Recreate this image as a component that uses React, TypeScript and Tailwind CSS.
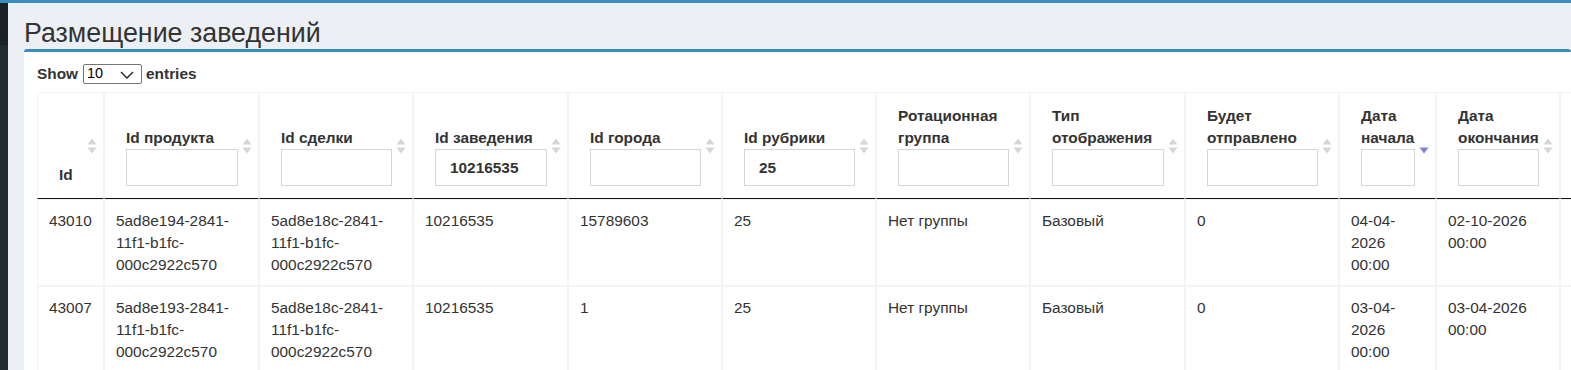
import React from 'react';

type Col = { key: string; label: string; width: number; filter?: string; hasInput: boolean; sort: 'both' | 'desc' };

const COLUMNS: Col[] = [
  { key: 'id', label: 'Id', width: 67, hasInput: false, sort: 'both' },
  { key: 'product', label: 'Id продукта', width: 155, hasInput: true, sort: 'both' },
  { key: 'deal', label: 'Id сделки', width: 154, hasInput: true, sort: 'both' },
  { key: 'place', label: 'Id заведения', width: 155, hasInput: true, filter: '10216535', sort: 'both' },
  { key: 'city', label: 'Id города', width: 154, hasInput: true, sort: 'both' },
  { key: 'rubric', label: 'Id рубрики', width: 154, hasInput: true, filter: '25', sort: 'both' },
  { key: 'group', label: 'Ротационная группа', width: 154, hasInput: true, sort: 'both' },
  { key: 'type', label: 'Тип отображения', width: 155, hasInput: true, sort: 'both' },
  { key: 'sent', label: 'Будет отправлено', width: 154, hasInput: true, sort: 'both' },
  { key: 'start', label: 'Дата начала', width: 97, hasInput: true, sort: 'desc' },
  { key: 'end', label: 'Дата окончания', width: 124, hasInput: true, sort: 'both' },
  // next column runs past the visible edge
  { key: 'more', label: '', width: 150, hasInput: false, sort: 'both' },
];

const ROWS: string[][] = [
  ['43010', '5ad8e194-2841-11f1-b1fc-000c2922c570', '5ad8e18c-2841-11f1-b1fc-000c2922c570', '10216535', '15789603', '25', 'Нет группы', 'Базовый', '0', '04-04-2026 00:00', '02-10-2026 00:00', ''],
  ['43007', '5ad8e193-2841-11f1-b1fc-000c2922c570', '5ad8e18c-2841-11f1-b1fc-000c2922c570', '10216535', '1', '25', 'Нет группы', 'Базовый', '0', '03-04-2026 00:00', '03-04-2026 00:00', ''],
];

const SortBoth = () => (
  <svg width="10" height="17" viewBox="0 0 10 17" className="block">
    <polygon points="0.5,7 5,1 9.5,7" fill="#d6d6d6" />
    <polygon points="0.5,10 9.5,10 5,16" fill="#d6d6d6" />
  </svg>
);

const SortDesc = () => (
  <svg width="10" height="17" viewBox="0 0 10 17" className="block">
    <polygon points="0.5,10 9.5,10 5,16" fill="#7f82dd" />
  </svg>
);

export default function App() {
  const tableWidth = COLUMNS.reduce((s, c) => s + c.width, 0);

  return (
    <div className="h-[370px] w-full overflow-hidden bg-[#ecf0f5] font-['Liberation_Sans',Arial,sans-serif] text-[#333]">
      <div className="h-[3px] bg-[#3c8dbc]" />
      <div className="flex h-[367px]">
        {/* sidebar edge */}
        <div className="flex w-[8px] shrink-0 flex-col">
          <div className="h-[42px] bg-[#1a2226]" />
          <div className="flex-1 bg-[#222d32]" />
        </div>

        <div className="min-w-0 flex-1 pl-[16px]">
          <h1 className="pt-[16px] text-[26.8px] font-normal leading-[29px] text-[#333]">Размещение заведений</h1>

          <div className="mt-[1px] h-[400px] overflow-hidden rounded-t-[3px] border-t-[3px] border-[#3c8dbc] bg-white pl-[13px] pt-[11px]">
            <div className="flex h-[22px] items-center text-[15.4px] font-bold">
              <span>Show</span>
              <div className="relative ml-[5px] mr-[4px] flex h-[20px] w-[59px] items-center rounded-[2px] border border-[#767676] bg-white pl-[3px] text-[14.5px] font-normal text-black">
                10
                <svg width="14" height="8" viewBox="0 0 14 8" className="absolute right-[7px] top-[6px]">
                  <path d="M1 1 L7 7 L13 1" fill="none" stroke="#222" strokeWidth="1.4" />
                </svg>
              </div>
              <span>entries</span>
            </div>

            <table
              className="mt-[7px] table-fixed border-separate border-spacing-0 text-[15.4px] leading-[22px]"
              style={{ width: tableWidth }}
            >
              <colgroup>
                {COLUMNS.map((c) => (
                  <col key={c.key} style={{ width: c.width }} />
                ))}
              </colgroup>
              <thead>
                <tr>
                  {COLUMNS.map((c) => (
                    <th
                      key={c.key}
                      className="relative border border-[#f4f4f4] border-b-[#111] pb-[12px] pl-[21px] pr-[20px] pt-[12px] text-left align-bottom font-bold"
                    >
                      <div>{c.label}</div>
                      {c.hasInput && (
                        <div className="flex h-[37px] w-full items-center border border-[#d2d6de] bg-white pl-[14px] font-bold text-[#333]">
                          {c.filter}
                        </div>
                      )}
                      {c.label && (
                        <span className="absolute right-[6px] top-1/2 -translate-y-1/2">
                          {c.sort === 'desc' ? <SortDesc /> : <SortBoth />}
                        </span>
                      )}
                    </th>
                  ))}
                </tr>
              </thead>
              <tbody>
                {ROWS.map((row, i) => (
                  <tr key={i}>
                    {row.map((cell, j) => (
                      <td key={j} className="border border-[#f4f4f4] pb-[9px] pl-[11px] pr-[9px] pt-[10px] align-top">
                        {cell}
                      </td>
                    ))}
                  </tr>
                ))}
              </tbody>
            </table>
          </div>
        </div>
      </div>
    </div>
  );
}
